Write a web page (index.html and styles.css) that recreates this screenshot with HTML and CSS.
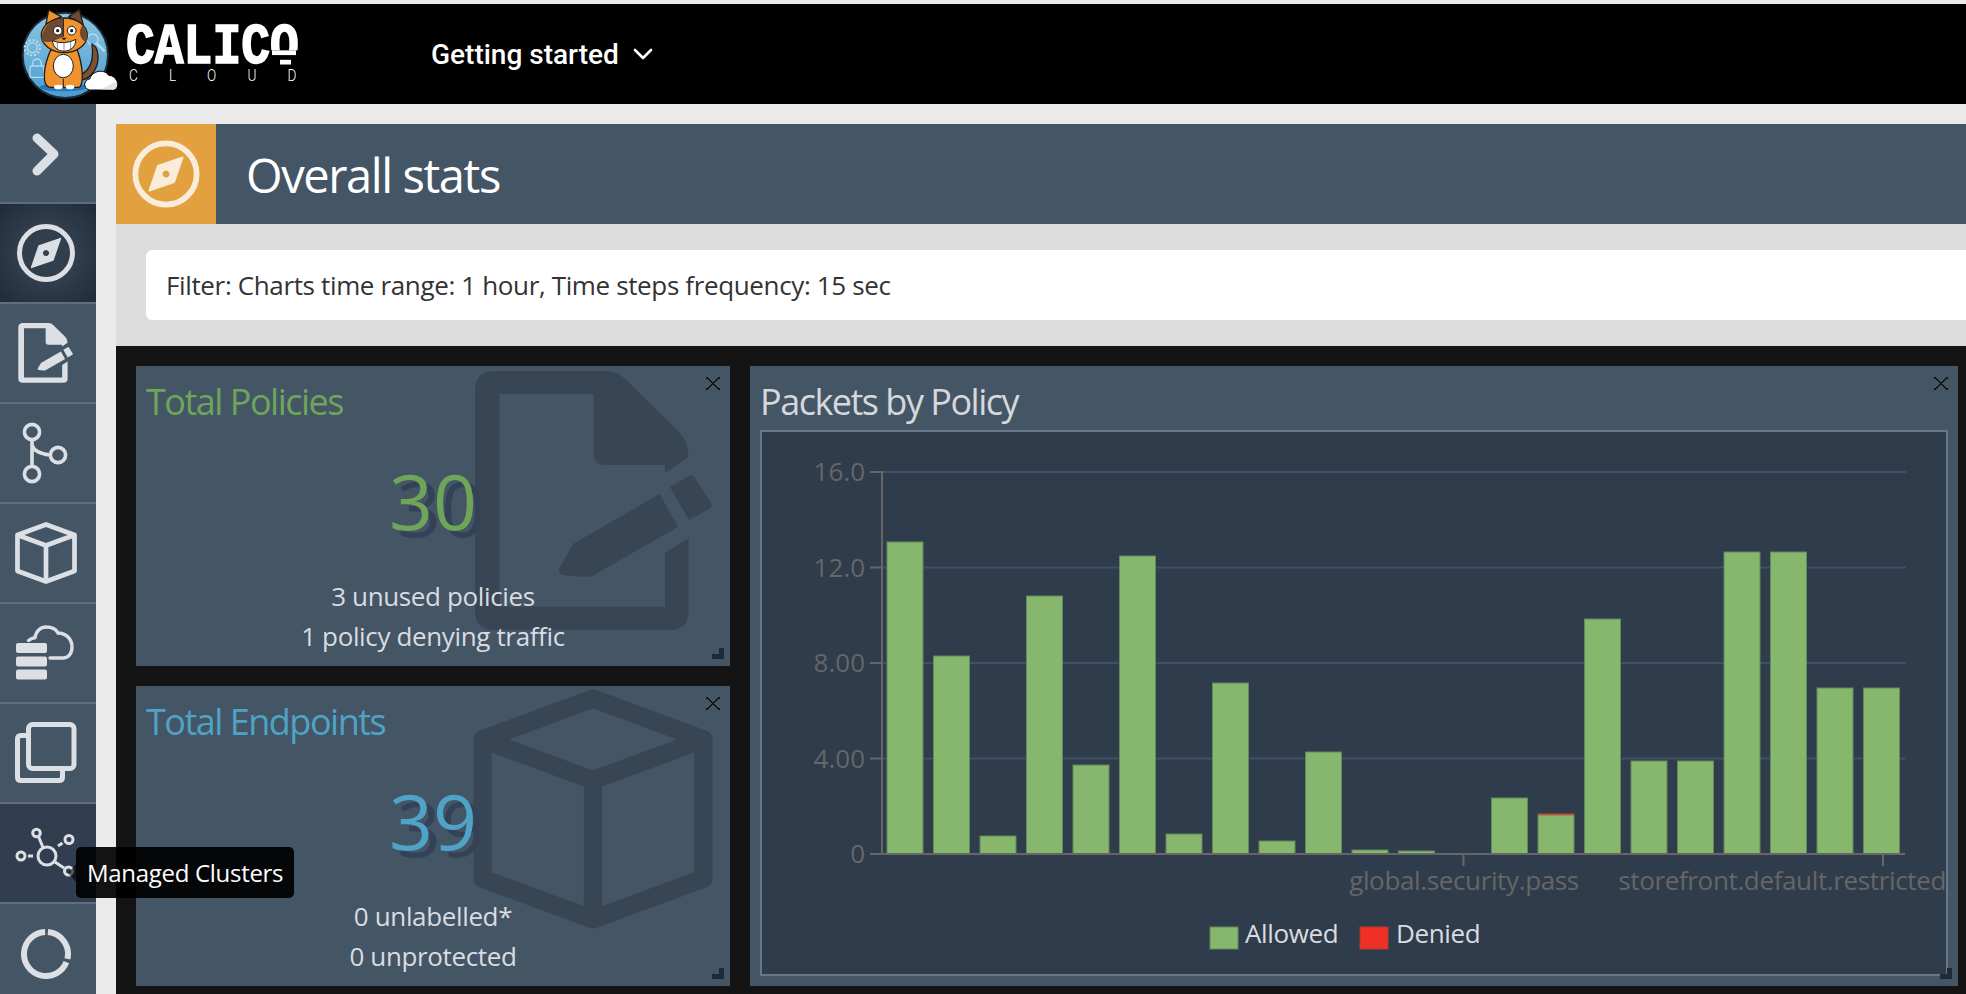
FILE: index.html
```html
<!DOCTYPE html>
<html lang="en">
<head>
<meta charset="utf-8">
<title>Calico Cloud</title>
<link rel="stylesheet" href="styles.css">
</head>
<body>
<svg class="defs" aria-hidden="true">
  <defs>
    <symbol id="i-compass" viewBox="0 0 64 64">
      <circle cx="32" cy="32" r="26.5" fill="none" stroke="currentColor" stroke-width="5"/>
      <path fill="currentColor" fill-rule="evenodd" stroke="currentColor" stroke-width="1.5" stroke-linejoin="round" d="M46.4 17.6 L39 39 L17.6 46.4 L25 25 Z M32 28.2 a3.8 3.8 0 1 0 0.01 0 Z"/>
    </symbol>
    <symbol id="i-policy" viewBox="0 0 240 260">
      <path fill="currentColor" d="M20 0 H131 Q143 0 151 9 L202 59 Q213.6 70 213.6 86 L190 102 V94 H130 Q118.5 94 118.5 82 V23 H24.6 V235.7 H190 V182 L213.6 167 V240 Q213.6 259 195 259 H20 Q0 259 0 240 V20 Q0 0 20 0 Z"/>
      <path fill="currentColor" d="M98 173 L184.6 123 L203 155.7 L116 205.7 Q100 206 88 204 Q82 202 85 196 Z"/>
      <path fill="currentColor" d="M195 116 L214 105 Q218 103 220 107 L236 132 Q238 136 234 138 L214 149 Z"/>
    </symbol>
    <symbol id="i-cube" viewBox="0 0 100 100">
      <path fill="none" stroke="currentColor" stroke-width="7.6" stroke-linejoin="round" d="M50 4 L96 21 V79 L50 96 L4 79 V21 Z M4 21 L50 38 L96 21 M50 38 V96"/>
    </symbol>
  </defs>
</svg>

<header class="topbar">
  <svg class="logo" viewBox="0 12 390 300" aria-label="Calico logo">
    <defs>
      <linearGradient id="sky" x1="0" y1="0" x2="0" y2="1">
        <stop offset="0" stop-color="#8cc5e2"/>
        <stop offset="1" stop-color="#4a9dd0"/>
      </linearGradient>
    </defs>
    <circle cx="196" cy="166" r="128" fill="url(#sky)" stroke="#1e2b36" stroke-width="6"/>
    <g fill="none" stroke="#b5daee" stroke-width="4">
      <circle cx="97" cy="143" r="15"/>
      <circle cx="97" cy="143" r="23" stroke-dasharray="7 5" stroke-width="6"/>
      <rect x="90" y="198" width="42" height="34" rx="3"/>
      <path d="M98 198 v-8 a13 13 0 0 1 26 0 v8"/>
      <circle cx="278" cy="118" r="16"/>
      <path d="M290 130 l24 24" stroke-width="8"/>
    </g>
    <ellipse cx="190" cy="262" rx="72" ry="12" fill="#2d74ba"/>
    <path d="M240 225 C272 212 282 180 276 132 C296 140 304 190 276 222 C266 234 252 240 240 240 Z" fill="#7d5233" stroke="#1e1e1e" stroke-width="4"/>
    <path d="M152 150 C130 200 124 258 150 262 H236 C252 258 250 200 232 150 Z" fill="#f0922d" stroke="#1e1e1e" stroke-width="4"/>
    <ellipse cx="190" cy="198" rx="30" ry="35" fill="#fff" stroke="#1e1e1e" stroke-width="3"/>
    <path d="M190 236 V262" stroke="#1e1e1e" stroke-width="3"/>
    <ellipse cx="175" cy="261" rx="13" ry="7" fill="#fff"/>
    <ellipse cx="210" cy="261" rx="13" ry="7" fill="#fff"/>
    <path d="M138 72 L146 30 L184 50 Z" fill="#f0922d" stroke="#1e1e1e" stroke-width="4" stroke-linejoin="round"/>
    <path d="M206 50 L238 28 L250 76 Z" fill="#6e4a30" stroke="#1e1e1e" stroke-width="4" stroke-linejoin="round"/>
    <ellipse cx="193" cy="106" rx="69" ry="52" fill="#f0922d" stroke="#1e1e1e" stroke-width="4"/>
    <path d="M190 55 C155 56 126 80 125 122 C135 126 150 128 158 124 L190 110 Z" fill="#6e4a30"/>
    <path d="M246 76 C258 88 264 108 258 126 C248 122 238 110 240 92 Z" fill="#6e4a30"/>
    <path d="M190 55 V110" stroke="#1e1e1e" stroke-width="3"/>
    <circle cx="173" cy="92" r="13" fill="#fff" stroke="#1e1e1e" stroke-width="3"/>
    <circle cx="215" cy="92" r="13" fill="#fff" stroke="#1e1e1e" stroke-width="3"/>
    <circle cx="173" cy="92" r="5" fill="#1e1e1e"/>
    <circle cx="215" cy="92" r="5" fill="#1e1e1e"/>
    <path d="M157 122 Q192 136 228 118 Q226 152 192 154 Q160 152 157 122 Z" fill="#fff" stroke="#1e1e1e" stroke-width="3"/>
    <path d="M184 113 H200 L192 121 Z" fill="#1e1e1e"/>
    <path d="M172 128 V148 M192 130 V153 M212 126 V148" stroke="#1e1e1e" stroke-width="1.5"/>
    <path d="M268 270 C248 264 250 240 270 236 C274 214 312 204 326 226 C352 226 362 264 342 270 Z" fill="#fff" stroke="#000" stroke-width="3"/>
    <path d="M300 268 C320 262 336 250 350 244 C354 256 350 268 340 269 Z" fill="#e4e4e4"/>
  </svg>
  <div class="wordmark">
    <span class="word">CALIC<span class="word-o">O</span></span>
    <span class="sub">CLOUD</span>
  </div>
  <nav class="nav">
    <span>Getting started</span>
    <svg class="nav-chevron" viewBox="0 0 20 12"><path d="M2 2 L10 10 L18 2" fill="none" stroke="#fff" stroke-width="2.6" stroke-linecap="round" stroke-linejoin="round"/></svg>
  </nav>
</header>

<div class="shell">
  <aside class="sidebar">
    <div class="side-item">
      <svg class="ic-chevron" viewBox="0 0 30 44"><path d="M6 5 L23 21 L6 38" fill="none" stroke="currentColor" stroke-width="9" stroke-linejoin="round" stroke-linecap="round"/></svg>
    </div>
    <div class="side-item is-active">
      <svg class="ic-compass"><use href="#i-compass"/></svg>
    </div>
    <div class="side-item">
      <svg class="ic-policy"><use href="#i-policy"/></svg>
    </div>
    <div class="side-item">
      <svg class="ic-branch" viewBox="0 0 48 62" fill="none" stroke="currentColor" stroke-width="3.6">
        <circle cx="10" cy="10" r="7.6"/><circle cx="10" cy="52" r="7.6"/><circle cx="36" cy="33" r="7.6"/>
        <path d="M10 18 V44 M10 23 C12 30 20 32 28 33"/>
      </svg>
    </div>
    <div class="side-item">
      <svg class="ic-cube"><use href="#i-cube"/></svg>
    </div>
    <div class="side-item">
      <svg class="ic-stack" viewBox="0 0 60 56">
        <rect x="0" y="18" width="31" height="10" rx="2" fill="currentColor"/>
        <rect x="0" y="31.5" width="31" height="10" rx="2" fill="currentColor"/>
        <rect x="0" y="44.5" width="31" height="10" rx="2" fill="currentColor"/>
        <path d="M12.5 15.5 C15 13.5 17 13 19 12.5 C20 6 25 2 30 2 C36 2 40 4 42 8 C50 8 56 14 56 22 C56 29 52 33 47 33 H34" fill="none" stroke="currentColor" stroke-width="3.4" stroke-linecap="round"/>
      </svg>
    </div>
    <div class="side-item">
      <svg class="ic-copy" viewBox="0 0 62 62" fill="none" stroke="currentColor" stroke-width="5" stroke-linejoin="round">
        <rect x="13.5" y="2.5" width="45.5" height="44" rx="4"/>
        <path d="M13 13.5 H6 Q2.5 13.5 2.5 17 V55 Q2.5 58.5 6 58.5 H44 Q47.5 58.5 47.5 55 V47"/>
      </svg>
    </div>
    <div class="side-item is-hover">
      <svg class="ic-clusters" viewBox="0 0 62 52" fill="none" stroke="currentColor" stroke-width="3">
        <circle cx="32" cy="29" r="9"/>
        <circle cx="21.5" cy="6" r="3.8"/><circle cx="54" cy="12.5" r="4"/><circle cx="6" cy="29" r="4"/><circle cx="53.5" cy="44" r="4"/>
        <path d="M23.5 9.5 L28 20.5 M43 19 L47.5 16 M13 29 H18 M40 35 L49 41"/>
      </svg>
      <div class="tooltip">Managed Clusters</div>
    </div>
    <div class="side-item">
      <svg class="ic-donut" viewBox="0 0 50 50" fill="none" stroke="currentColor" stroke-width="6">
        <path d="M26.9 3.1 A22 22 0 0 1 46.4 29.9"/>
        <path d="M45.4 33.2 A22 22 0 1 1 24.2 3"/>
      </svg>
    </div>
  </aside>

  <main class="main">
    <section class="pagehead">
      <div class="pagehead-icon"><svg class="ic-title"><use href="#i-compass"/></svg></div>
      <h1>Overall stats</h1>
    </section>
    <section class="filterbar">
      <div class="filterbox">Filter: Charts time range: 1 hour, Time steps frequency: 15 sec</div>
    </section>
    <section class="board">
      <article class="card card-policies">
        <svg class="watermark wm-policy"><use href="#i-policy"/></svg>
        <h2 class="card-title green">Total Policies</h2>
        <div class="stat green">30</div>
        <p class="note">3 unused policies<br>1 policy denying traffic</p>
        <span class="close"></span><span class="resize"></span>
      </article>
      <article class="card card-endpoints">
        <svg class="watermark wm-cube"><use href="#i-cube"/></svg>
        <h2 class="card-title blue">Total Endpoints</h2>
        <div class="stat blue">39</div>
        <p class="note">0 unlabelled*<br>0 unprotected</p>
        <span class="close"></span><span class="resize"></span>
      </article>
      <article class="card card-chart">
        <h2 class="card-title plain">Packets by Policy</h2>
        <div class="plot">
          <svg class="chart" viewBox="762 432 1184 542">
            <g class="grid">
              <path d="M882 472 H1906 M882 567.5 H1906 M882 663 H1906 M882 758.5 H1906"/>
            </g>
            <g class="bars">
              <rect x="887" y="542" width="36" height="312"/>
              <rect x="933.5" y="656" width="36" height="198"/>
              <rect x="980" y="836" width="36" height="18"/>
              <rect x="1026.5" y="596" width="36" height="258"/>
              <rect x="1073" y="765" width="36" height="89"/>
              <rect x="1119.5" y="556" width="36" height="298"/>
              <rect x="1166" y="834" width="36" height="20"/>
              <rect x="1212.5" y="683" width="36" height="171"/>
              <rect x="1259" y="841" width="36" height="13"/>
              <rect x="1305.5" y="752" width="36" height="102"/>
              <rect x="1352" y="850" width="36" height="4"/>
              <rect x="1398.5" y="851" width="36" height="3"/>
              <rect x="1491.5" y="798" width="36" height="56"/>
              <rect x="1538" y="815" width="36" height="39"/>
              <rect x="1584.5" y="619" width="36" height="235"/>
              <rect x="1631" y="761" width="36" height="93"/>
              <rect x="1677.5" y="761" width="36" height="93"/>
              <rect x="1724" y="552" width="36" height="302"/>
              <rect x="1770.5" y="552" width="36" height="302"/>
              <rect x="1817" y="688" width="36" height="166"/>
              <rect x="1863.5" y="688" width="36" height="166"/>
            </g>
            <rect class="denied" x="1538" y="813.5" width="36" height="1.5"/>
            <g class="axis">
              <path d="M882 471 V855 M870 472 H882 M870 567.5 H882 M870 663 H882 M870 758.5 H882 M870 854 H1905 M1463.5 854 V866 M1883 854 V866"/>
            </g>
            <g class="tick-y">
              <text x="865" y="481">16.0</text>
              <text x="865" y="576.5">12.0</text>
              <text x="865" y="672">8.00</text>
              <text x="865" y="767.5">4.00</text>
              <text x="865" y="863">0</text>
            </g>
            <g class="tick-x">
              <text x="1464" y="890" text-anchor="middle">global.security.pass</text>
              <text x="1946" y="890" text-anchor="end">storefront.default.restricted</text>
            </g>
            <g class="legend">
              <rect class="swatch-a" x="1210" y="927" width="28" height="22"/>
              <text x="1245" y="943">Allowed</text>
              <rect class="swatch-d" x="1360" y="927" width="28" height="22"/>
              <text x="1396" y="943">Denied</text>
            </g>
          </svg>
        </div>
        <span class="close"></span><span class="resize"></span>
      </article>
    </section>
  </main>
</div>
</body>
</html>
```
FILE: styles.css
```css
* { box-sizing: border-box; }
html, body { margin: 0; height: 994px; overflow: hidden; }
body {
  width: 1966px;
  background: #ebebeb;
  border-top: 4px solid #ebebeb;
  font-family: "Open Sans", "Noto Sans", sans-serif;
  color: #d9dce0;
}
.defs { position: absolute; width: 0; height: 0; }

/* header */
.topbar { display: flex; align-items: center; height: 100px; background: #000; color: #fff; }
.logo { width: 130px; height: 100px; flex: none; }
.wordmark { display: flex; flex-direction: column; width: 174px; margin-left: -4px; flex: none; }
.word {
  font-family: "Liberation Mono", monospace;
  font-weight: 700;
  font-size: 48px;
  line-height: 40px;
  height: 40px;
  -webkit-text-stroke: 1.4px #fff;
  transform: translateY(4px) scaleY(1.18);
  transform-origin: 50% 50%;
  white-space: nowrap;
}
.word-o { position: relative; }
.word-o::before {
  content: "";
  position: absolute;
  left: 0;
  right: 0;
  bottom: 12.5px;
  height: 13px;
  background: linear-gradient(#fff, #fff) 50% 0 / 24px 4px no-repeat, #000;
}
.word-o::after { content: ""; position: absolute; left: 10px; width: 11px; bottom: 13.5px; height: 4px; background: #fff; }
.sub {
  font-family: "Roboto", sans-serif;
  font-weight: 300;
  font-size: 17px;
  line-height: 18px;
  letter-spacing: 39px;
  margin: 2px 0 0 3px;
  white-space: nowrap;
  transform: scaleX(.8);
  transform-origin: 0 50%;
  width: 260px;
}
.nav { display: flex; align-items: center; gap: 14px; margin-left: 131px; font-family: Roboto, sans-serif; font-weight: 500; font-size: 28px; }
.nav-chevron { width: 20px; height: 12px; }

/* layout */
.shell { display: flex; height: 890px; }
.sidebar { width: 96px; flex: none; background: #445566; color: #dcdfe4; }
.side-item {
  position: relative;
  display: flex;
  align-items: center;
  justify-content: center;
  height: 100px;
  padding-right: 4px;
  border-bottom: 2px solid #5e6d7f;
}
.side-item:last-child { border-bottom: 0; }
.is-active { background: radial-gradient(ellipse at center, #33424f 0%, #2f3d4c 45%, #1f2b37 100%); }
.is-hover { background: #303e4f; }
.ic-chevron { width: 30px; height: 44px; margin-top: 3px; }
.ic-compass { width: 64px; height: 64px; }
.ic-policy { width: 56px; height: 60px; }
.ic-branch { width: 48px; height: 62px; }
.ic-cube { width: 62px; height: 62px; }
.ic-stack { width: 60px; height: 56px; }
.ic-copy { width: 62px; height: 62px; }
.ic-clusters { width: 62px; height: 52px; }
.ic-donut { width: 50px; height: 50px; }

.tooltip {
  position: absolute;
  z-index: 5;
  left: 76px;
  top: 43px;
  width: 218px;
  height: 51px;
  padding-left: 11px;
  border-radius: 5px;
  background: rgba(0, 0, 0, .92);
  color: #fff;
  font-size: 24px;
  letter-spacing: -.3px;
  line-height: 51px;
  white-space: nowrap;
}
.tooltip::before {
  content: "";
  position: absolute;
  left: -8px;
  top: 17px;
  border-style: solid;
  border-width: 9px 8px 9px 0;
  border-color: transparent rgba(0, 0, 0, .6) transparent transparent;
}

/* main */
.main { flex: 1; min-width: 0; padding: 20px 0 0 20px; display: flex; flex-direction: column; }
.pagehead { display: flex; align-items: center; height: 100px; background: #445566; }
.pagehead-icon { display: flex; align-items: center; justify-content: center; width: 100px; height: 100px; background: #e3a03e; color: #f9ecd9; }
.ic-title { width: 74px; height: 74px; }
.pagehead h1 { margin: 2px 0 0 30px; font-size: 47px; letter-spacing: -1.4px; font-weight: 400; color: #fff; line-height: 100px; }
.filterbar { height: 122px; padding: 26px 0 0 30px; background: #dcdcdc; }
.filterbox {
  height: 70px;
  padding-left: 20px;
  border-radius: 6px 0 0 6px;
  background: #fff;
  color: #333;
  font-size: 26px;
  letter-spacing: -.36px;
  line-height: 70px;
  white-space: nowrap;
}
.board {
  flex: 1;
  display: grid;
  grid-template-columns: 594px 1208px;
  grid-template-rows: 300px 300px;
  gap: 20px;
  padding: 20px 0 0 20px;
  background: #141414;
}
.card { position: relative; background: #445566; overflow: hidden; display: flex; flex-direction: column; align-items: center; }
.card-chart { grid-column: 2; grid-row: 1 / span 2; }
.card-title { align-self: flex-start; margin: 14px 0 0 10px; font-size: 36px; letter-spacing: -1.5px; line-height: 44px; font-weight: 400; position: relative; }
.green { color: #6ea558; }
.blue { color: #4fa3c7; }
.plain { color: #d5d8dc; }
.stat { position: relative; margin-top: 37px; font-size: 77px; line-height: 80px; text-shadow: 8px 7px 0 #334256; }
.note { position: relative; margin: 35px 0 0; font-size: 26px; letter-spacing: -.36px; line-height: 40px; text-align: center; }
.watermark { position: absolute; color: #374555; }
.wm-policy { left: 339px; top: 5px; width: 240px; height: 260px; }
.wm-cube { left: 337px; top: 3px; width: 240px; height: 240px; }
.close { position: absolute; right: 10px; top: 11px; width: 14px; height: 13px;
  background:
    linear-gradient(to top right, transparent 46%, #141414 46%, #141414 54%, transparent 54%),
    linear-gradient(to top left, transparent 46%, #141414 46%, #141414 54%, transparent 54%); }
.resize { position: absolute; right: 6px; bottom: 7px; width: 12px; height: 11px; border-right: 5px solid #1f2a38; border-bottom: 5px solid #1f2a38; }

/* chart */
.plot { flex: 1; align-self: stretch; margin: 6px 10px 10px; border: 2px solid #68788a; background: #2f3c4c; min-height: 0; }
.chart { display: block; width: 1184px; height: 542px; overflow: hidden; }
.grid path { fill: none; stroke: #3f5165; stroke-width: 2; }
.bars rect { fill: #87b76d; stroke: #5f8a5a; stroke-width: 1; }
.denied { fill: #d9432f; }
.axis path { fill: none; stroke: #666; stroke-width: 2; }
.tick-y text { text-anchor: end; fill: #666; font-size: 26px; }
.tick-x text { fill: #666; font-size: 26px; letter-spacing: -.36px; }
.legend text { fill: #d9dce0; font-size: 26px; letter-spacing: -.35px; }
.swatch-a { fill: #87b76d; stroke: #5f8a5a; stroke-width: 1; }
.swatch-d { fill: #ee3124; stroke: #b03a2e; stroke-width: 1; }
```
